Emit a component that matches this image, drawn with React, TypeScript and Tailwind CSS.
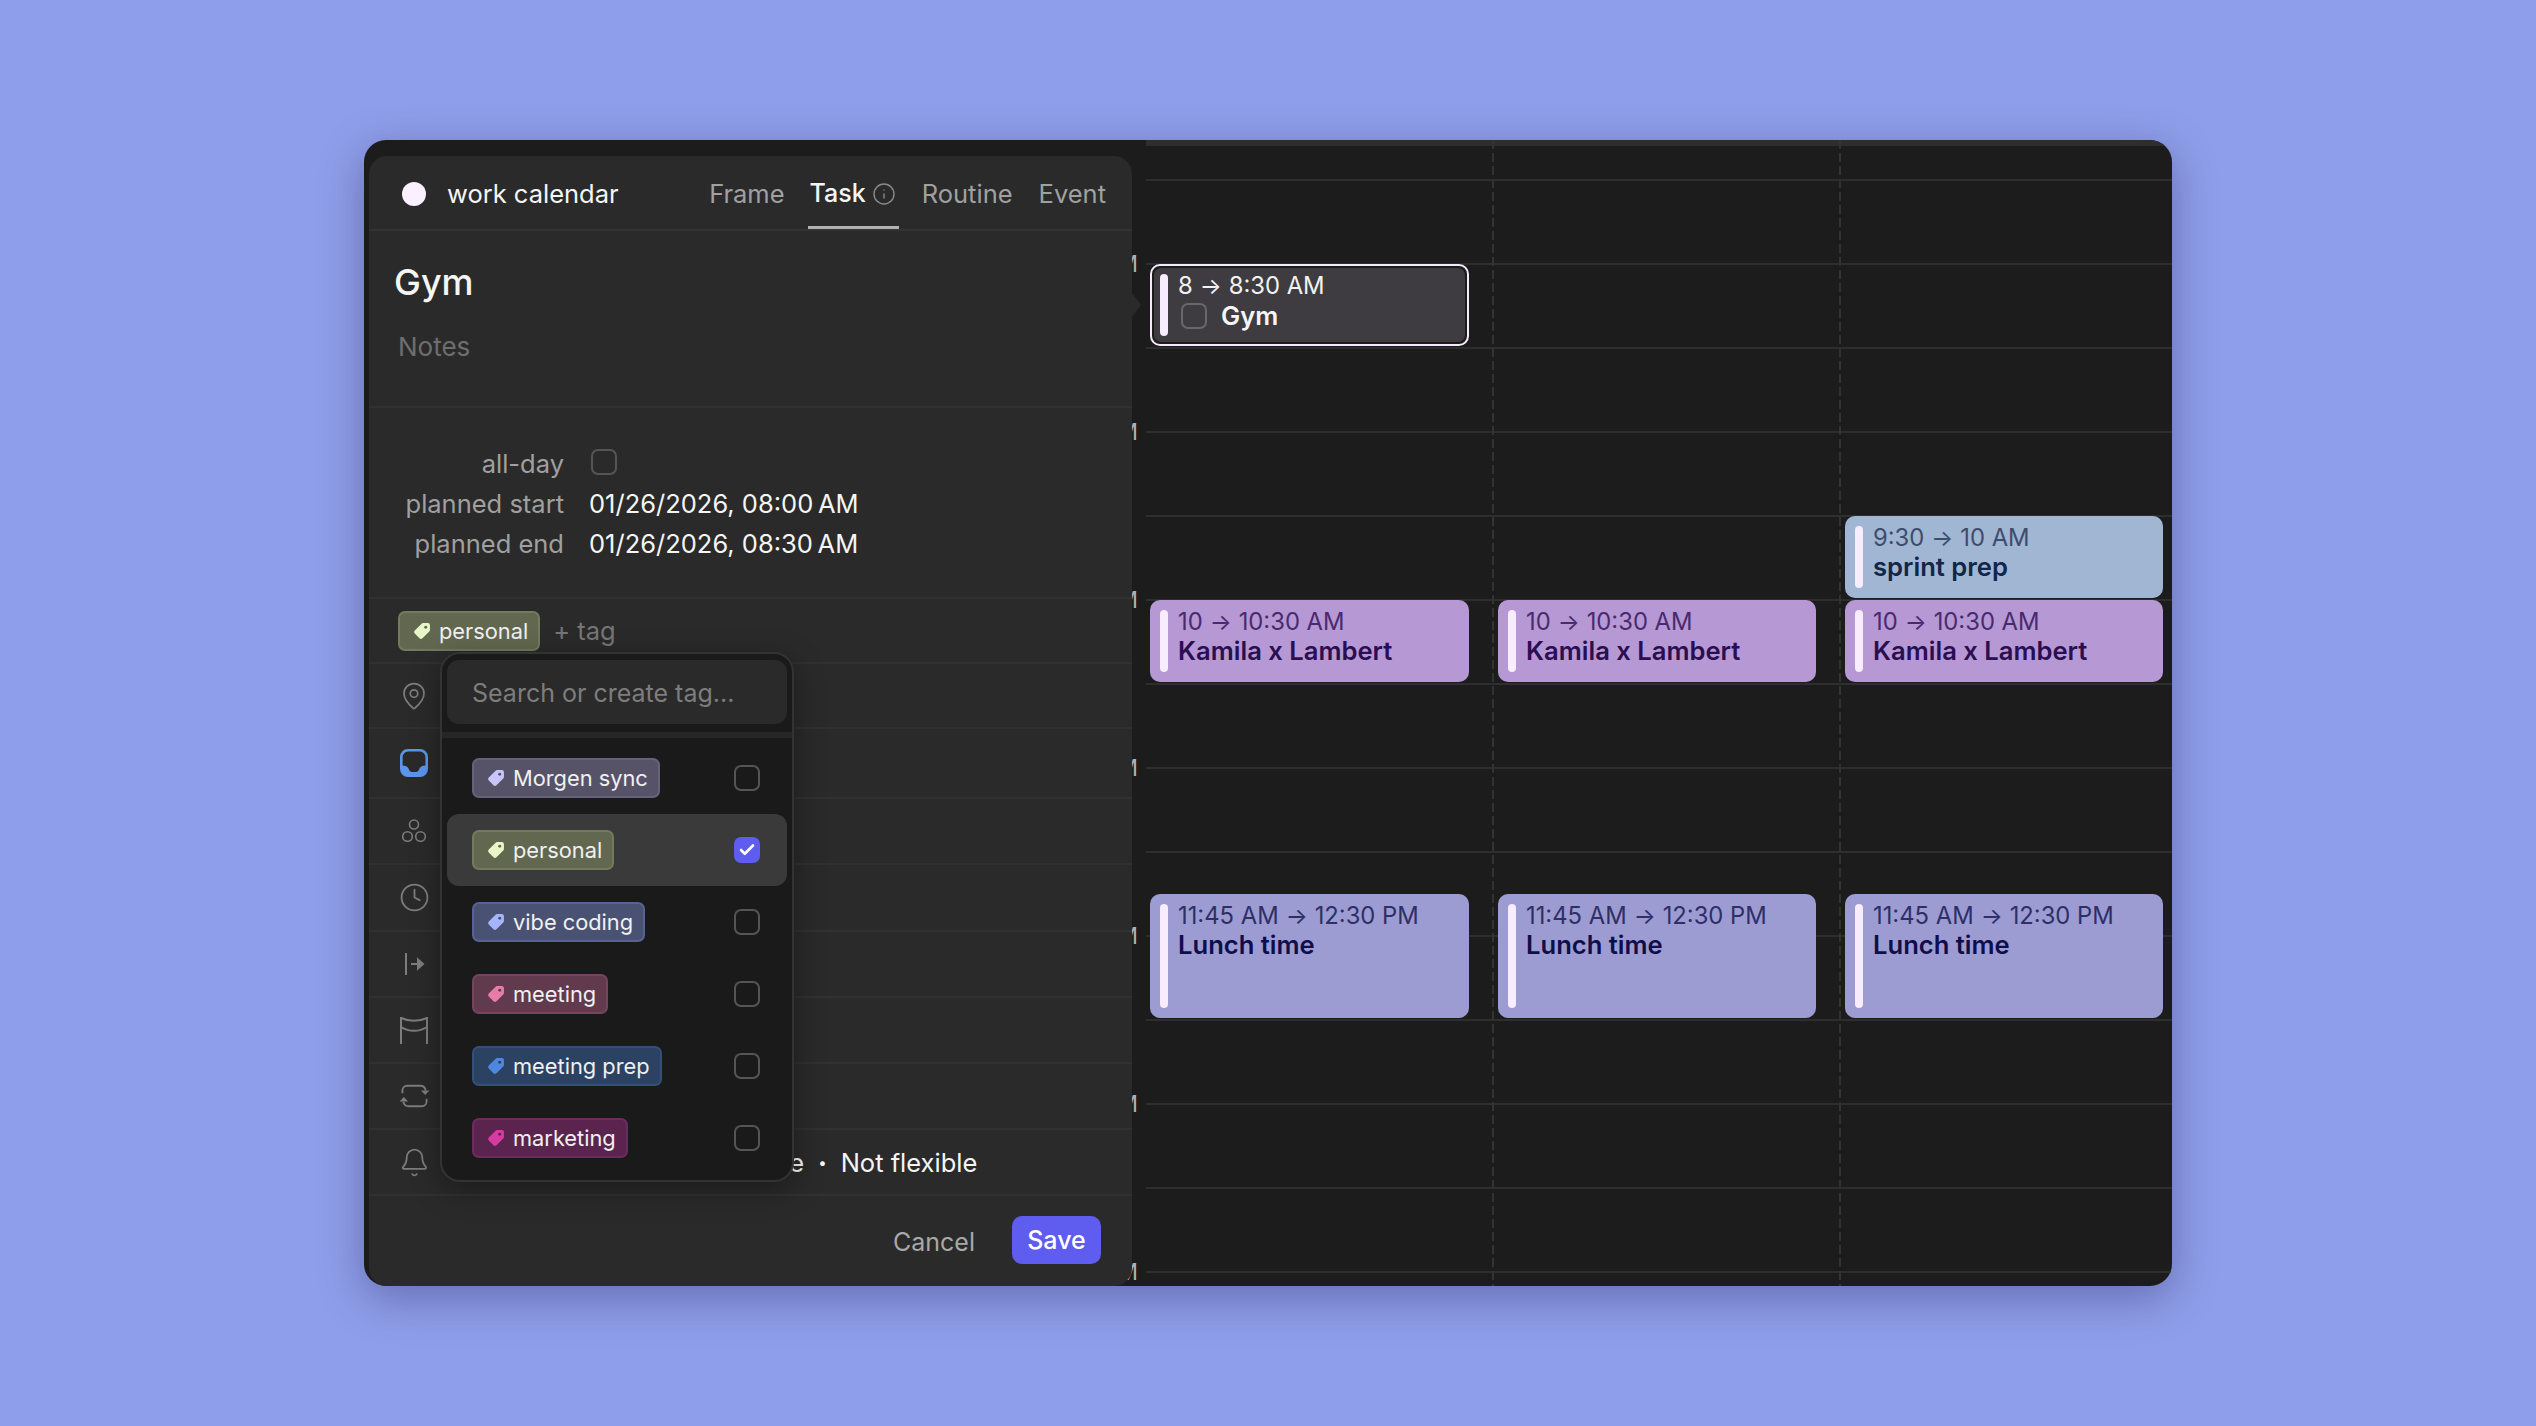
import { Bell, Check, Clock, Info, MapPin } from 'lucide-react';

function TagIcon({ color, hole }: { color: string; hole: string }) {
    return (
        <svg width="19" height="19" viewBox="0 0 18 18" className={`shrink-0 ${color}`}>
            <path
                fill="currentColor"
                d="M10.5 1H15a2 2 0 0 1 2 2v4.5a2 2 0 0 1-.6 1.4l-6.5 6.5a2 2 0 0 1-2.8 0l-4.5-4.5a2 2 0 0 1 0-2.8l6.5-6.5A2 2 0 0 1 10.5 1z"
            />
            <circle cx="13" cy="5" r="1.4" className={hole} fill="currentColor" />
        </svg>
    );
}

const tags = [
    { name: 'Morgen sync', chip: 'bg-[#565369] border-[#646178]', icon: 'text-[#c9c4fa]', hole: 'text-[#565369]' },
    { name: 'personal', chip: 'bg-[#62674f] border-[#737a5e]', icon: 'text-[#e8f5c8]', hole: 'text-[#62674f]', selected: true },
    { name: 'vibe coding', chip: 'bg-[#4a5273] border-[#596294]', icon: 'text-[#a5b4fc]', hole: 'text-[#4a5273]' },
    { name: 'meeting', chip: 'bg-[#613a4e] border-[#74455d]', icon: 'text-[#e87ca8]', hole: 'text-[#613a4e]' },
    { name: 'meeting prep', chip: 'bg-[#2b4263] border-[#34507a]', icon: 'text-[#4f86e0]', hole: 'text-[#2b4263]' },
    { name: 'marketing', chip: 'bg-[#5b244f] border-[#6e2b60]', icon: 'text-[#d63c9f]', hole: 'text-[#5b244f]' },
];

function TagChip({ name, chip, icon, hole }: { name: string; chip: string; icon: string; hole: string }) {
    return (
        <span className={`inline-flex h-[40px] items-center gap-[8px] rounded-[7px] border-2 pl-[12px] pr-[10px] text-[21.8px] text-[#f0f0f0] ${chip}`}>
            <TagIcon color={icon} hole={hole} />
            {name}
        </span>
    );
}

function Checkbox({ checked }: { checked?: boolean }) {
    if (checked) {
        return (
            <span className="flex h-[26px] w-[26px] items-center justify-center rounded-[7px] bg-[#5f5cf0] text-white">
                <Check size={18} strokeWidth={3.5} />
            </span>
        );
    }
    return <span className="block h-[26px] w-[26px] shrink-0 rounded-[7px] border-2 border-[#555555]" />;
}

function CirclesIcon() {
    return (
        <svg width="26" height="26" viewBox="0 0 26 26" fill="none" stroke="currentColor" strokeWidth="1.6">
            <circle cx="13" cy="6.500" r="4.500" />
            <circle cx="6.500" cy="18.500" r="4.800" />
            <circle cx="19.500" cy="18.500" r="4.800" />
        </svg>
    );
}

function InboxIcon() {
    return (
        <svg width="30" height="30" viewBox="0 0 30 30">
            <path
                fill="#5b96ec"
                fillRule="evenodd"
                d="M9 1h12a8 8 0 0 1 8 8v12a8 8 0 0 1-8 8H9a8 8 0 0 1-8-8V9a8 8 0 0 1 8-8zM9 3.600A5.400 5.400 0 0 0 3.600 9v8.500c2.600 0 5 .6 6.200 3.500.6 1.700 1.600 3 3 3h4.400c1.400 0 2.400-1.300 3-3 1.200-2.900 3.600-3.500 6.200-3.500V9A5.400 5.400 0 0 0 21 3.600z"
            />
        </svg>
    );
}

function StartIcon() {
    return (
        <svg width="24" height="24" viewBox="0 0 24 24" fill="none" stroke="currentColor" strokeWidth="2">
            <path d="M4 1v22" />
            <path d="M9 12h11" />
            <path d="M16 7.500 21 12l-5 4.500z" fill="currentColor" />
        </svg>
    );
}

function HammockIcon() {
    return (
        <svg width="30" height="30" viewBox="0 0 30 30" fill="none" stroke="currentColor" strokeWidth="2">
            <path d="M2 2v27M28 2v27" />
            <path d="M2 3c8 3.500 18 3.500 26 0" />
            <path d="M2 12c8 5 18 5 26 0" />
        </svg>
    );
}

function RepeatIcon() {
    return (
        <svg width="31" height="26" viewBox="0 0 32 28" fill="none" stroke="currentColor" strokeWidth="2">
            <path d="M3 11V8a5 5 0 0 1 5-5h14c3.500 0 5.500 2 6 5" />
            <path d="M29 17v3a5 5 0 0 1-5 5H10c-3.500 0-5.500-2-6-5" />
            <path d="M23 8h9l-4.500 5z" fill="currentColor" stroke="none" />
            <path d="M0 20h9l-4.500-5z" fill="currentColor" stroke="none" />
        </svg>
    );
}

const iconRows = [
    { height: 'h-[65px]', icon: <MapPin size={30} strokeWidth={1.4} /> },
    { height: 'h-[70px]', icon: <InboxIcon /> },
    { height: 'h-[66px]', icon: <CirclesIcon /> },
    { height: 'h-[67px]', icon: <Clock size={31} strokeWidth={1.4} /> },
    { height: 'h-[66px]', icon: <StartIcon /> },
    { height: 'h-[66px]', icon: <HammockIcon /> },
    { height: 'h-[66px]', icon: <RepeatIcon /> },
];

const hours = ['8 AM', '9 AM', '10 AM', '11 AM', '12 PM', '1 PM', '2 PM'];

const eventStyles = {
    kamila: { box: 'bg-[#b598d4]', time: 'text-[#4a2a6e]', title: 'text-[#2a0e52]' },
    sprint: { box: 'bg-[#a1b6d2]', time: 'text-[#3d4d6e]', title: 'text-[#12264a]' },
    lunch: { box: 'bg-[#9c9cd2]', time: 'text-[#2f2f68]', title: 'text-[#0f0e4a]' },
};

function TimeRange({ from, to, className }: { from: string; to: string; className: string }) {
    return (
        <div className={`flex items-center gap-[7px] text-[23.8px] ${className}`}>
            <span>{from}</span>
            <span className="text-[23px] leading-[20px]">→</span>
            <span>{to}</span>
        </div>
    );
}

function EventCard({ kind, from, to, title, place }: { kind: keyof typeof eventStyles; from: string; to: string; title: string; place: string }) {
    const s = eventStyles[kind];
    return (
        <div className={`absolute left-[4px] flex gap-[10px] rounded-[10px] py-[10px] pl-[10px] ${place} ${s.box}`}>
            <span className="w-[8px] shrink-0 rounded-full bg-[#f8ecff]" />
            <div className="leading-[30px]">
                <TimeRange from={from} to={to} className={`-mt-[3px] ${s.time}`} />
                <div className={`-mt-[1px] text-[25.6px] font-semibold ${s.title}`}>{title}</div>
            </div>
        </div>
    );
}

function GymCard() {
    return (
        <div className="absolute left-[4px] top-[124px] h-[82px] w-[319px] rounded-[10px] border-2 border-[#f5eafc] p-[2px]">
            <div className="flex h-full gap-[10px] rounded-[7px] bg-[#3e3c40] py-[6px] pl-[6px]">
                <span className="w-[8px] shrink-0 rounded-full bg-[#f8ecff]" />
                <div className="leading-[30px]">
                    <TimeRange from="8" to="8:30 AM" className="-mt-[3px] text-[#f2f2f2]" />
                    <div className="flex items-center gap-[14px]">
                        <span className="ml-[3px] block h-[26px] w-[26px] rounded-[7px] border-2 border-[#68686b]" />
                        <span className="text-[25.6px] font-semibold text-[#f5f5f5]">Gym</span>
                    </div>
                </div>
            </div>
        </div>
    );
}

const stripe = 'w-[2px] shrink-0 bg-[repeating-linear-gradient(to_bottom,#333333_0_9px,transparent_9px_13px)]';

export default function App() {
    return (
        <div className="flex h-[1426px] w-full items-center justify-center bg-[#8f9eea] font-[family-name:Inter,sans-serif]">
            <div className="relative flex h-[1146px] w-[1808px] overflow-hidden rounded-[22px] bg-[#1c1c1c] shadow-[0_12px_44px_rgba(20,24,70,0.35)]">
                {/* calendar underneath */}
                <div className="flex w-[782px] shrink-0 flex-col items-end pr-[8px] pt-[110px] text-[23px] leading-[28px] text-[#b0b0b0]">
                    {hours.map((h) => (
                        <div key={h} className="h-[168px] shrink-0">{h}</div>
                    ))}
                </div>
                <div className="relative flex-1">
                    <div className="h-[41px] border-b-2 border-t-[6px] border-b-[#2e2e2e] border-t-[#2e2e2e]" />
                    {Array.from({ length: 13 }).map((_, i) => (
                        <div key={i} className="h-[84px] border-b-2 border-[#2e2e2e]" />
                    ))}
                    <div className="absolute inset-0 flex">
                        <div className="relative w-[346px]">
                            <GymCard />
                            <EventCard kind="kamila" place="top-[460px] h-[82px] w-[319px]" from="10" to="10:30 AM" title="Kamila x Lambert" />
                            <EventCard kind="lunch" place="top-[754px] h-[124px] w-[319px]" from="11:45 AM" to="12:30 PM" title="Lunch time" />
                        </div>
                        <div className={stripe} />
                        <div className="relative w-[345px]">
                            <EventCard kind="kamila" place="top-[460px] h-[82px] w-[318px]" from="10" to="10:30 AM" title="Kamila x Lambert" />
                            <EventCard kind="lunch" place="top-[754px] h-[124px] w-[318px]" from="11:45 AM" to="12:30 PM" title="Lunch time" />
                        </div>
                        <div className={stripe} />
                        <div className="relative flex-1">
                            <EventCard kind="sprint" place="top-[376px] h-[82px] w-[318px]" from="9:30" to="10 AM" title="sprint prep" />
                            <EventCard kind="kamila" place="top-[460px] h-[82px] w-[318px]" from="10" to="10:30 AM" title="Kamila x Lambert" />
                            <EventCard kind="lunch" place="top-[754px] h-[124px] w-[318px]" from="11:45 AM" to="12:30 PM" title="Lunch time" />
                        </div>
                    </div>
                </div>

                {/* event popover */}
                <div className="absolute bottom-0 left-[5px] top-[16px] flex w-[763px] flex-col rounded-[18px] bg-[#2a2a2a] text-[25.5px] text-[#f5f5f5]">
                    <span className="absolute -right-[9px] top-[137px] h-0 w-0 border-y-[12px] border-l-[9px] border-y-transparent border-l-[#2a2a2a]" />
                    <div className="flex h-[75px] shrink-0 items-center border-b-2 border-[#333333] pl-[33px] pr-[26px] pt-[3px]">
                        <span className="h-[24px] w-[24px] rounded-full bg-[#fbf0ff]" />
                        <span className="ml-[21px]">work calendar</span>
                        <div className="ml-auto flex h-full items-center gap-[23px] text-[#a0a0a0]">
                            <span>Frame</span>
                            <span className="flex h-full items-center gap-[6px] border-b-[3px] border-[#b0b0b0] pl-[2px] pr-[3px] pt-[3px] text-[25px] font-medium text-[#f5f5f5]">
                                Task
                                <Info size={24} strokeWidth={1.4} className="text-[#8a8a8a]" />
                            </span>
                            <span className="mr-[3px]">Routine</span>
                            <span>Event</span>
                        </div>
                    </div>
                    <div className="h-[177px] shrink-0 border-b-2 border-[#313131] pl-[25px] pt-[29px]">
                        <div className="text-[36px] font-medium leading-[44px]">Gym</div>
                        <div className="ml-[4px] mt-[27px] text-[26px] leading-[32px] text-[#6e6e6e]">Notes</div>
                    </div>
                    <div className="grid h-[191px] shrink-0 grid-cols-[195px_1fr] content-start gap-x-[25px] border-b-2 border-[#313131] pt-[36px] leading-[40px]">
                        <span className="text-right text-[#a0a0a0]">all-day</span>
                        <span className="flex -translate-y-[2px] items-center pl-[2px]"><Checkbox /></span>
                        <span className="text-right text-[#a0a0a0]">planned start</span>
                        <span>01/26/2026, 08:00{'\u202F'}AM</span>
                        <span className="text-right text-[#a0a0a0]">planned end</span>
                        <span>01/26/2026, 08:30{'\u202F'}AM</span>
                    </div>
                    <div className="flex h-[65px] shrink-0 items-start gap-[13px] border-b-2 border-[#313131] pl-[29px] pt-[12px]">
                        <TagChip name="personal" chip="bg-[#62674f] border-[#737a5e]" icon="text-[#e8f5c8]" hole="text-[#62674f]" />
                        <span className="mt-[1px] text-[#767676]">+ tag</span>
                    </div>
                    {iconRows.map((row, i) => (
                        <div key={i} className={`flex shrink-0 items-center border-b-2 border-[#313131] text-[#7d7d7d] ${row.height}`}>
                            <span className="flex w-[90px] justify-center">{row.icon}</span>
                        </div>
                    ))}
                    <div className="flex h-[66px] shrink-0 items-center border-b-2 border-[#313131] text-[#7d7d7d]">
                        <span className="flex w-[90px] justify-center"><Bell size={31} strokeWidth={1.4} /></span>
                        <span className="ml-[292px] mt-[3px] flex items-center gap-[14px] text-[25.5px] text-[#f5f5f5]">
                            <span>Free</span><span className="text-[15px]">•</span><span>Not flexible</span>
                        </span>
                    </div>
                    <div className="flex flex-1 items-start justify-end pr-[31px] pt-[20px]">
                        <span className="mr-[37px] mt-[8px] text-[25px] text-[#a8a8a8]">Cancel</span>
                        <span className="flex h-[48px] w-[89px] items-center justify-center rounded-[10px] bg-[#5f5cf0] pt-[2px] text-[25px] font-medium text-white">Save</span>
                    </div>

                    {/* tag picker */}
                    <div className="absolute left-[71px] top-[496px] h-[530px] w-[354px] overflow-hidden rounded-[20px] border-2 border-[#333333] bg-[#1a1a1a] shadow-[0_8px_30px_rgba(0,0,0,0.35)]">
                        <div className="h-[84px] border-b-[6px] border-[#262626] px-[5px] pt-[6px]">
                            <div className="flex h-[64px] items-center rounded-[12px] bg-[#2a2a2a] pl-[25px] pt-[4px] text-[25px] text-[#7d7d7d]">Search or create tag...</div>
                        </div>
                        <div className="px-[5px] pt-[4px]">
                            {tags.map((t) => (
                                <div key={t.name} className={`flex h-[72px] items-center justify-between rounded-[12px] pl-[25px] pr-[27px] ${t.selected ? 'bg-[#3a3a3a]' : ''}`}>
                                    <TagChip name={t.name} chip={t.chip} icon={t.icon} hole={t.hole} />
                                    <Checkbox checked={t.selected} />
                                </div>
                            ))}
                        </div>
                    </div>
                </div>
            </div>
        </div>
    );
}
